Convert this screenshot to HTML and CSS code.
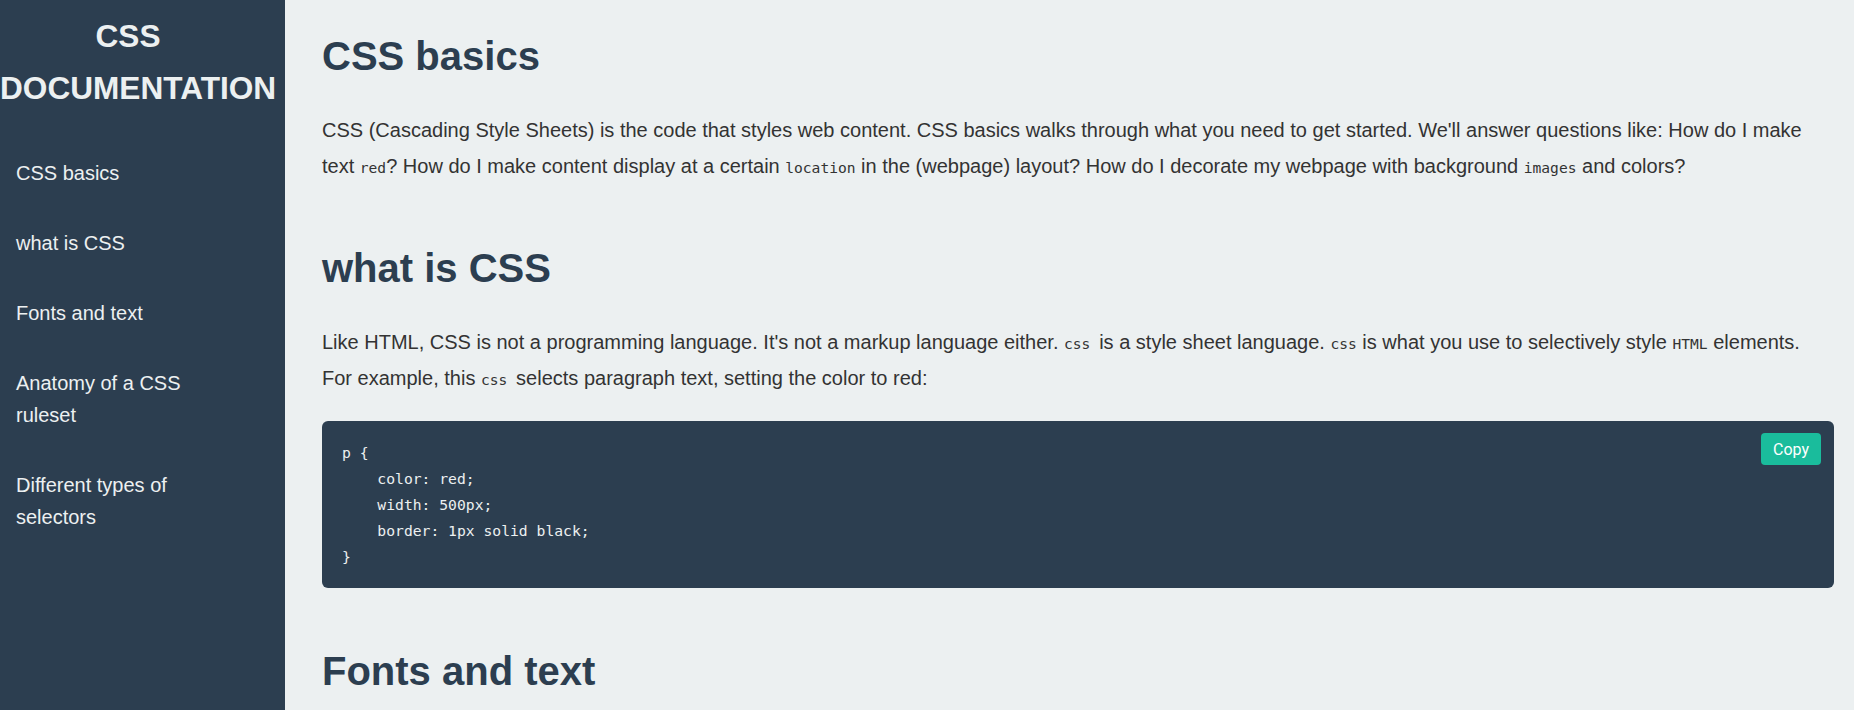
FILE: index.html
```html
<!DOCTYPE html>
<html lang="en">
<head>
<meta charset="utf-8">
<title>CSS Documentation</title>
<link rel="stylesheet" href="styles.css">
</head>
<body>
<div class="layout">
  <nav class="sidebar" id="navbar">
    <header class="sidebar-title">CSS DOCUMENTATION</header>
    <ul class="nav-list">
      <li><a class="nav-link" href="#CSS_basics">CSS basics</a></li>
      <li><a class="nav-link" href="#what_is_CSS">what is CSS</a></li>
      <li><a class="nav-link" href="#Fonts_and_text">Fonts and text</a></li>
      <li><a class="nav-link" href="#Anatomy_of_a_CSS_ruleset">Anatomy of a CSS ruleset</a></li>
      <li><a class="nav-link" href="#Different_types_of_selectors">Different types of selectors</a></li>
    </ul>
  </nav>
  <main class="main" id="main-doc">
    <section class="main-section" id="CSS_basics">
      <h1 class="section-title">CSS basics</h1>
      <p class="text">CSS (Cascading Style Sheets) is the code that styles web content. CSS basics walks through what you need to get started. We'll answer questions like: How do I make text <code class="inline-code">red</code>? How do I make content display at a certain <code class="inline-code">location</code> in the (webpage) layout? How do I decorate my webpage with background <code class="inline-code">images</code> and colors?</p>
    </section>
    <section class="main-section" id="what_is_CSS">
      <h1 class="section-title">what is CSS</h1>
      <p class="text">Like HTML, CSS is not a programming language. It's not a markup language either. <code class="inline-code">css </code> is a style sheet language. <code class="inline-code">css</code> is what you use to selectively style <code class="inline-code">HTML</code> elements. For example, this <code class="inline-code">css </code> selects paragraph text, setting the color to red:</p>
      <div class="code-block">
<pre class="code">p {
    color: red;
    width: 500px;
    border: 1px solid black;
}</pre>
        <button class="copy-btn" type="button">Copy</button>
      </div>
    </section>
    <section class="main-section" id="Fonts_and_text">
      <h1 class="section-title">Fonts and text</h1>
      <p class="text">Now that we've explored some CSS fundamentals, let's improve the appearance of the example by adding more rules and information to the <code class="inline-code">style.css</code> file.</p>
    </section>
  </main>
</div>
</body>
</html>
```

FILE: styles.css
```css
* {
  box-sizing: border-box;
}

html, body {
  margin: 0;
  padding: 0;
}

body {
  font-family: "Liberation Sans", Arial, sans-serif;
  background: #ecf0f1;
  color: #333333;
}

.layout {
  display: flex;
  height: 100vh;
}

.sidebar {
  width: 285px;
  flex-shrink: 0;
  background: #2c3e50;
  color: #ecf0f1;
}

.sidebar-title {
  width: 256px;
  margin-top: 10px;
  font-size: 31.6px;
  font-weight: bold;
  line-height: 52px;
  text-align: center;
}

.nav-list {
  list-style: none;
  margin: 24px 0 0 0;
  padding: 0;
}

.nav-link {
  display: block;
  width: 200px;
  padding: 19px 0 19px 16px;
  font-size: 20px;
  line-height: 32px;
  color: #ecf0f1;
  text-decoration: none;
}

.main {
  flex: 1;
  min-width: 0;
  overflow-y: auto;
  scrollbar-width: none;
  padding: 32px 20px 0 37px;
}

.main-section {
  padding-bottom: 35px;
}

.section-title {
  margin: 0 0 32px 0;
  font-size: 40px;
  line-height: 48px;
  font-weight: bold;
  color: #2c3e50;
}

.text {
  margin: 0 0 25px 0;
  font-size: 20px;
  line-height: 36px;
}

.inline-code {
  font-family: "DejaVu Sans Mono", "Liberation Mono", monospace;
  font-size: 14.6px;
  line-height: 1;
}

.code-block {
  position: relative;
  margin: 0 0 24px 0;
  background: #2c3e50;
  border-radius: 6px;
}

.code {
  margin: 0;
  padding: 19px 20px 18px 20px;
  font-family: "DejaVu Sans Mono", "Liberation Mono", monospace;
  font-size: 14.7px;
  line-height: 26px;
  color: #ecf0f1;
}

.copy-btn {
  position: absolute;
  top: 12px;
  right: 13px;
  width: 60px;
  height: 32px;
  border: none;
  border-radius: 4px;
  background: #1abc9c;
  color: #ffffff;
  font-family: Roboto, "Open Sans", sans-serif;
  font-size: 16px;
  padding: 0;
  cursor: pointer;
}
```
